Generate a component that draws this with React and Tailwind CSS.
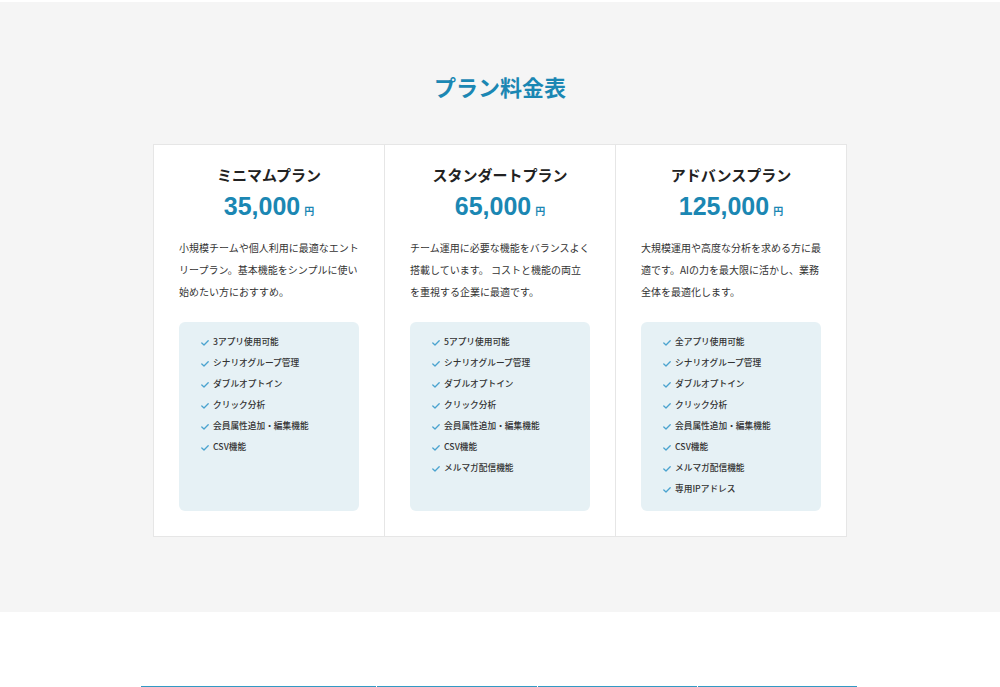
import React from "react";

const jp = { fontFamily: '"Noto Sans CJK JP", sans-serif' };
const num = { fontFamily: '"Liberation Sans", "Noto Sans CJK JP", sans-serif' };

const plans = [
  {
    name: "ミニマムプラン",
    price: "35,000",
    desc: ["小規模チームや個人利用に最適なエント", "リープラン。基本機能をシンプルに使い", "始めたい方におすすめ。"],
    features: ["3アプリ使用可能", "シナリオグループ管理", "ダブルオプトイン", "クリック分析", "会員属性追加・編集機能", "CSV機能"],
  },
  {
    name: "スタンダートプラン",
    price: "65,000",
    desc: ["チーム運用に必要な機能をバランスよく", "搭載しています。 コストと機能の両立", "を重視する企業に最適です。"],
    features: ["5アプリ使用可能", "シナリオグループ管理", "ダブルオプトイン", "クリック分析", "会員属性追加・編集機能", "CSV機能", "メルマガ配信機能"],
  },
  {
    name: "アドバンスプラン",
    price: "125,000",
    desc: ["大規模運用や高度な分析を求める方に最", "適です。AIの力を最大限に活かし、業務", "全体を最適化します。"],
    features: ["全アプリ使用可能", "シナリオグループ管理", "ダブルオプトイン", "クリック分析", "会員属性追加・編集機能", "CSV機能", "メルマガ配信機能", "専用IPアドレス"],
  },
];

function Check() {
  return (
    <svg width="8" height="6" viewBox="0 0 8 6" className="mr-[4px] mt-[2px] shrink-0">
      <polyline points="0.8,3 3,5 7.2,0.8" fill="none" stroke="#4aa3cf" strokeWidth="1.3" strokeLinecap="round" strokeLinejoin="round" />
    </svg>
  );
}

function Plan({ plan, last }) {
  return (
    <div className={`flex flex-col pt-[20px] px-[25px] pb-[25px] ${last ? "w-[230px]" : "w-[231px] border-r border-[#e6e6e6]"}`}>
      <div className="text-center text-[15px] leading-[20px] font-bold text-[#222]" style={jp}>{plan.name}</div>
      <div className="mt-[6px] flex items-baseline justify-center leading-[30px]" style={num}>
        <span className="text-[25px] font-bold text-[#1b87b3]">{plan.price}</span>
        <span className="ml-[4px] text-[10px] font-bold text-[#1b87b3]" style={jp}>円</span>
      </div>
      <div className="mt-[11px] text-[10px] leading-[22px] text-[#333]" style={jp}>
        {plan.desc.map((l, i) => (
          <div key={i} className="whitespace-nowrap">{l}</div>
        ))}
      </div>
      <div className="mt-[19px] flex-1 rounded-[6px] bg-[#e6f1f5] pt-[9px] pb-[12px] pl-[22px]">
        {plan.features.map((f, i) => (
          <div key={i} className="flex items-center h-[21px] text-[8.7px] font-medium text-[#333]" style={jp}>
            <Check />
            <span>{f}</span>
          </div>
        ))}
      </div>
    </div>
  );
}

export default function App() {
  return (
    <div className="w-[1000px] h-[687px] overflow-hidden bg-white">
      <div className="h-[2px] bg-white" />
      <div className="bg-[#f5f5f5] pt-[69px] pb-[75px]">
        <h2 className="text-center text-[22px] leading-[30px] font-bold text-[#1b87b3]" style={jp}>プラン料金表</h2>
        <div className="mt-[43px] mx-auto w-[694px] flex border border-[#e6e6e6] bg-white">
          {plans.map((p, i) => (
            <Plan key={i} plan={p} last={i === 2} />
          ))}
        </div>
      </div>
      <div className="pt-[74px]">
        <div className="ml-[141px] flex gap-px">
          <div className="w-[235px] border-t-2 border-[#3399c4]" />
          <div className="w-[160px] border-t-2 border-[#3399c4]" />
          <div className="w-[159px] border-t-2 border-[#3399c4]" />
          <div className="w-[159px] border-t-2 border-[#3399c4]" />
        </div>
      </div>
    </div>
  );
}
